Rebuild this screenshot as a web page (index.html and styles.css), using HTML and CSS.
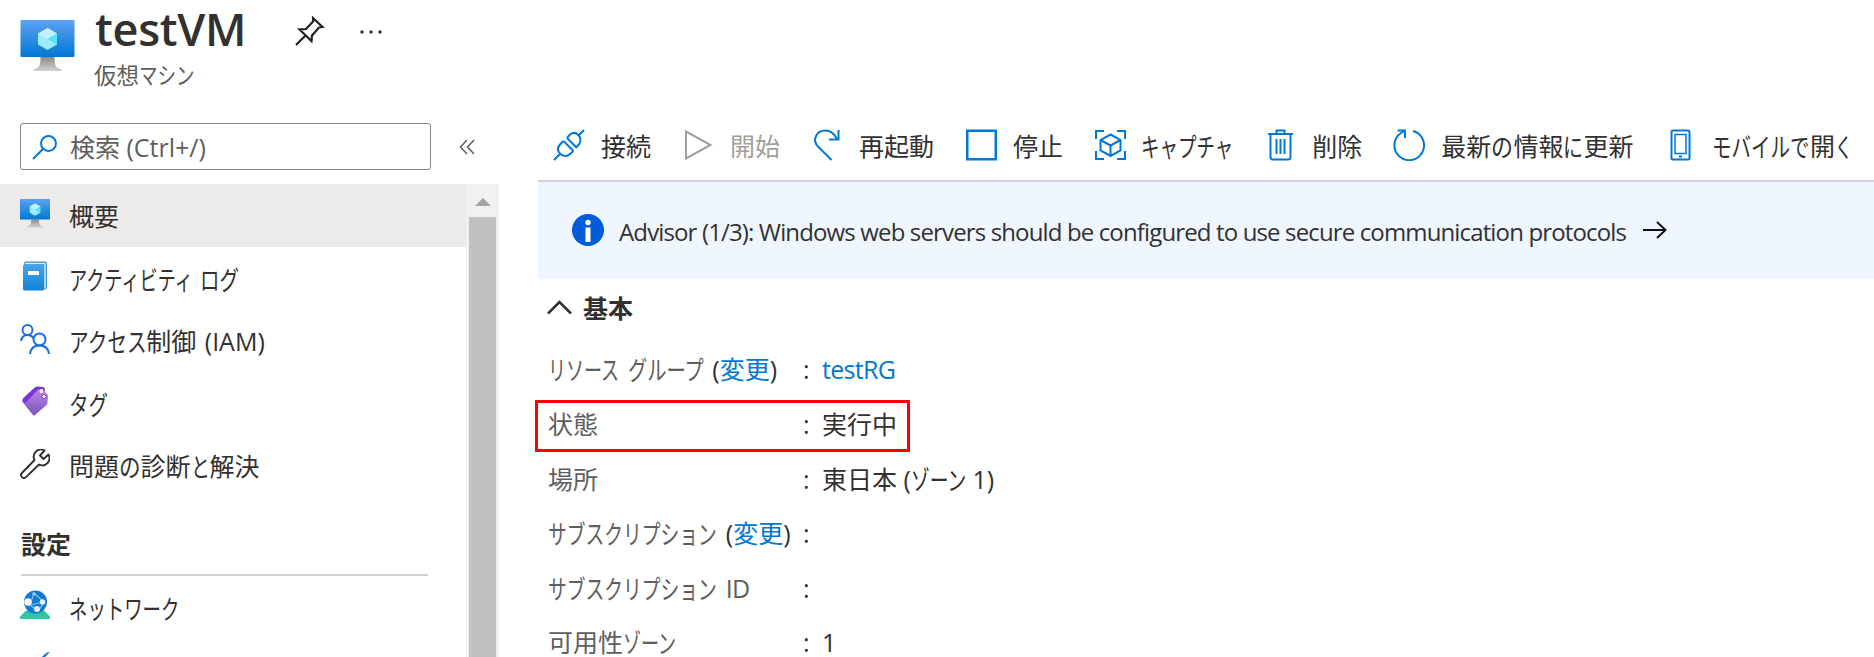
FILE: index.html
```html
<!DOCTYPE html>
<html lang="ja">
<head>
<meta charset="utf-8">
<title>testVM</title>
<link rel="stylesheet" href="styles.css">
</head>
<body>
<svg class="defs" width="0" height="0">
  <defs>
    <linearGradient id="screen" x1="0" y1="0" x2="0" y2="1"><stop offset="0" stop-color="#5ea0ef"/><stop offset="1" stop-color="#0078d4"/></linearGradient>
    <linearGradient id="stand" x1="0" y1="0" x2="0" y2="1"><stop offset="0" stop-color="#8a8a8a"/><stop offset="1" stop-color="#d2d2d2"/></linearGradient>
    <linearGradient id="book" x1="0" y1="0" x2="0" y2="1"><stop offset="0" stop-color="#42a5f0"/><stop offset="1" stop-color="#1583db"/></linearGradient>
    <linearGradient id="tag" x1="0" y1="0" x2="0" y2="1"><stop offset="0" stop-color="#b98ae6"/><stop offset="1" stop-color="#7c50bd"/></linearGradient>
    <symbol id="vm" viewBox="0 0 54 52">
      <path d="M20 37h14c0 8 1 11 6 12q1 .5 1 2H13q0-1.500 1-2c5-1 6-4 6-12z" fill="url(#stand)"/>
      <rect width="54" height="37" rx="1" fill="url(#screen)"/>
      <path d="M27 8l9.500 5.500v11L27 30l-9.500-5.500v-11z" fill="#9cebff"/>
      <path d="M27 8l9.500 5.500L27 19l-9.500-5.500z" fill="#c3f1ff"/>
      <path d="M36.500 13.500v11L27 19z" fill="#50e6ff"/>
    </symbol>
  </defs>
</svg>
<header class="header">
  <svg class="vm-icon" width="55" height="52"><use href="#vm"/></svg>
  <div class="heading">
    <div class="title-row">
      <h1 class="title">testVM</h1>
      <svg class="pin" width="30" height="30" viewBox="0 0 30 30" fill="none" stroke="#222" stroke-width="2.200"><path d="M1 29l9.500-9.500M18 2l9.500 9-3.500.5-7 8-.5 5.500L4.500 13.500l6.500-.5 7-7.500z"/></svg>
      <svg class="more" width="24" height="6" fill="#323130"><circle cx="3" cy="3" r="1.700"/><circle cx="12" cy="3" r="1.700"/><circle cx="21" cy="3" r="1.700"/></svg>
    </div>
    <p class="subtitle">仮想<span class="kana" style="--n:3;--s:.82">マシン</span></p>
  </div>
</header>
<div class="body">
  <aside class="side">
    <div class="search-row">
      <div class="search">
        <svg width="26" height="26" viewBox="0 0 26 26" fill="none" stroke="#0078d4" stroke-width="2"><circle cx="16.500" cy="9.500" r="7.500"/><path d="M11 15L1 25"/></svg>
        <span>検索 (Ctrl+/)</span>
      </div>
      <svg class="collapse" width="16" height="16" fill="none" stroke="#605e5c" stroke-width="1.500"><path d="M8 1L1.500 8 8 15M15 1L8.500 8l6.500 7"/></svg>
    </div>
    <div class="menu-wrap">
      <nav class="menu">
        <a class="item selected"><svg width="30" height="30" viewBox="0 0 30 30"><use href="#vm" width="30" height="29"/></svg><span>概要</span></a>
        <a class="item"><svg width="30" height="30" viewBox="0 0 30 30"><rect x="4" y=".5" width="23" height="28" rx="2" fill="#3d8fd0"/><path d="M5 2.500h20v25" fill="none" stroke="#d5ebfa" stroke-width="1.500"/><rect x="3" y="3.500" width="21" height="26" rx="1.500" fill="url(#book)"/><rect x="8" y="10" width="11" height="4" fill="#fff"/></svg><span><span class="kana" style="--n:7;--s:.725">アクティビティ</span> <span class="kana" style="--n:2;--s:.78">ログ</span></span></a>
        <a class="item"><svg width="30" height="30" viewBox="0 0 30 30" fill="none" stroke="#1a6ee0" stroke-width="2"><circle cx="7.500" cy="6" r="5"/><circle cx="19.500" cy="15.500" r="6"/><path d="M1 17q1-6 6.500-6 4 0 6 3M10 30q1-8.500 9.500-8.500T29 30"/></svg><span><span class="kana" style="--n:4;--s:.785">アクセス</span>制御 (IAM)</span></a>
        <a class="item"><svg width="30" height="30" viewBox="0 0 30 30"><path d="M3 12.500L15 1.500q1-1 3-1l5 .5q2 .5 2 2.500l-1 6-17 8z" fill="#7a35d8"/><path d="M3 14L18 3l8 4q2 1 2 3l-.5 7q0 1-1 2L15 29q-1 1-2 0L2.500 16q-1-1 .5-2z" fill="url(#tag)"/><path d="M3 12.500L15 1.500l4 1L5 17.500 2.500 15z" fill="#7a35d8"/><circle cx="21.500" cy="5" r="2" fill="#fff"/><circle cx="24" cy="10.500" r="2" fill="#fff" stroke="#7a3bc8"/></svg><span class="kana" style="--n:2;--s:.78">タグ</span></a>
        <a class="item"><svg width="30" height="30" viewBox="0 0 30 30" fill="none" stroke="#323130" stroke-width="1.900" stroke-linejoin="round"><path d="M24.500 1.500a7.200 7.200 0 0 0-10 9.500L1.900 24a2.900 2.900 0 0 0 4.100 4.100L19 15.500a7.200 7.200 0 0 0 9.500-10L23.500 10l-3.500-3.500z"/></svg><span>問題<span class="kana" style="--n:1;--s:.86">の</span>診断<span class="kana" style="--n:1;--s:.76">と</span>解決</span></a>
        <h2 class="section">設定</h2>
        <a class="item"><svg width="30" height="30" viewBox="0 0 30 30"><path d="M6 20.500h18l6 6v2.500H0v-2.500z" fill="#32c5a5"/><circle cx="15.500" cy="12" r="11.500" fill="#1379d3"/><path d="M14 3l10 9-14 3zM24 12l-5 8M10 15l8 6" fill="none" stroke="#7cc0f5" stroke-width="1.200"/><circle cx="8" cy="12" r="3.800" fill="#f1f7fc"/><circle cx="14" cy="4" r="1.800" fill="#8fc9f5"/><circle cx="22.500" cy="12" r="2.800" fill="#e2f1fc"/><circle cx="17" cy="19" r="3" fill="#e2f1fc"/></svg><span class="kana" style="--n:6;--s:.735">ネットワーク</span></a>
        <a class="item next"><svg width="30" height="30" viewBox="0 0 30 30"><path d="M30 0L5 25l-2-2L25 2q2-2 5-2z" fill="#1a6ee0"/></svg></a>
      </nav>
      <div class="scrollbar"><i class="arrow-up"></i><i class="thumb"></i></div>
    </div>
  </aside>
  <main class="main">
    <div class="toolbar">
      <a class="cmd"><svg width="32" height="32" viewBox="0 0 32 32" fill="none" stroke="#0078d4" stroke-width="2"><path d="M1 31l6.500-6.500M25 7l6-6M10.500 12l10 10M14 9l10 10"/><path d="M10.500 12l-3.500 3.500q-4.500 5 .5 9.500 5 4 9.500 0l3.500-3M14 9l3-3.500q5-3.500 8.500.5t.5 9.500l-3 3"/></svg><span>接続</span></a>
      <a class="cmd disabled"><svg width="32" height="32" viewBox="0 0 32 32" fill="none" stroke="#a19f9d" stroke-width="2"><path d="M4 2.500v27L28.500 16z"/></svg><span>開始</span></a>
      <a class="cmd"><svg width="32" height="32" viewBox="0 0 32 32" fill="none" stroke="#0078d4" stroke-width="2"><path d="M20.500 31L7 17.500C1 11 5 1.500 14.500 1.500q7 0 11.500 8.500M27.500 1v9.500H18"/></svg><span>再起動</span></a>
      <a class="cmd"><svg width="32" height="32" viewBox="0 0 32 32" fill="none" stroke="#0078d4" stroke-width="2.500"><rect x="2.250" y="1.750" width="28.500" height="28.500"/></svg><span>停止</span></a>
      <a class="cmd capture"><svg width="32" height="32" viewBox="0 0 32 32" fill="none" stroke="#0078d4" stroke-width="2"><path d="M2 10V2h8M23 2h8v8M31 22v8h-8M10 30H2v-8M16.500 5.500l10 5.500v10.500l-10 5.500-10-5.500V11zM6.500 11l10 5.500 10-5.500M16.500 16.500V27"/></svg><span class="kana" style="--n:5;--s:.74">キャプチャ</span></a>
      <a class="cmd"><svg width="32" height="32" viewBox="0 0 32 32" fill="none" stroke="#0078d4" stroke-width="2"><path d="M4 5h25M12.500 5V1.500h8V5M6.500 5v23q0 2.500 2.500 2.500h15q2.500 0 2.500-2.500V5M12.500 10v15M16.500 10v15M20.500 10v15"/></svg><span>削除</span></a>
      <a class="cmd"><svg width="32" height="32" viewBox="0 0 32 32" fill="none" stroke="#0078d4" stroke-width="2"><path d="M20 2A14.800 14.800 0 1 1 8 4L12 1.500M4.500 1.500h7.500v7.500"/></svg><span>最新<span class="kana" style="--n:1;--s:.88">の</span>情報<span class="kana" style="--n:1;--s:.8">に</span>更新</span></a>
      <a class="cmd"><svg width="32" height="32" viewBox="0 0 32 32" fill="none" stroke="#0078d4" stroke-width="2"><rect x="7.500" y="1.500" width="18" height="29" rx="1.500"/><path d="M11 5.500h11v19H11z" stroke-width="1.500"/><path d="M15 27.500h3"/></svg><span><span class="kana" style="--n:5;--s:.78">モバイルで</span>開<span class="kana" style="--n:1;--s:.7">く</span></span></a>
    </div>
    <div class="banner">
      <svg width="32" height="32"><circle cx="16" cy="16" r="16" fill="#015cda"/><circle cx="16" cy="8.500" r="2.700" fill="#fff"/><path d="M13.500 13.500h5V28h-5z" fill="#fff"/></svg>
      <span class="advice">Advisor (1/3): Windows web servers should be configured to use secure communication protocols</span>
      <svg width="24" height="18" fill="none" stroke="#111" stroke-width="2"><path d="M0 9h22M14 1l8.500 8-8.500 8"/></svg>
    </div>
    <div class="essentials"><svg width="25" height="15" fill="none" stroke="#323130" stroke-width="2.500"><path d="M1 13.500L12.500 2 24 13.500"/></svg><h2>基本</h2></div>
    <div class="props">
      <div class="prop"><div class="label"><span class="kana" style="--n:4;--s:.72">リソース</span> <span class="kana" style="--n:4;--s:.77">グループ</span> <b>(</b><a>変更</a><b>)</b></div><i>:</i><a class="latin">testRG</a></div>
      <div class="prop marked"><div class="label">状態</div><i>:</i><span>実行中</span></div>
      <div class="prop"><div class="label">場所</div><i>:</i><span>東日本 (<span class="kana" style="--n:3;--s:.75">ゾーン</span> 1)</span></div>
      <div class="prop"><div class="label"><span class="kana" style="--n:9;--s:.75">サブスクリプション</span> <b>(</b><a>変更</a><b>)</b></div><i>:</i></div>
      <div class="prop"><div class="label"><span class="kana" style="--n:9;--s:.75">サブスクリプション</span> <span class="latin">ID</span></div><i>:</i></div>
      <div class="prop"><div class="label">可用性<span class="kana" style="--n:3;--s:.72">ゾーン</span></div><i>:</i><span>1</span></div>
    </div>
  </main>
</div>
</body>
</html>
```
FILE: styles.css
```css
* { box-sizing: border-box; }
body {
  margin: 0;
  width: 1874px;
  height: 657px;
  overflow: hidden;
  background: #fff;
  color: #323130;
  font: 400 25px/36px "Open Sans", "Noto Sans CJK JP", sans-serif;
  white-space: nowrap;
}
svg { flex: none; display: block; }
.defs { position: absolute; }
h1, h2, p { margin: 0; }

/* Condensed kana run: --n characters, each --s em wide */
.kana {
  display: inline-block;
  transform: scale(var(--s), 1.06);
  transform-origin: left;
  margin-right: calc(var(--n) * (var(--s) - 1) * 1em);
}

.header { display: flex; height: 123px; padding-left: 20px; }
.vm-icon { margin-top: 20px; }
.heading { margin-left: 20px; }
.title-row { display: flex; height: 60px; align-items: center; }
.title { width: 200px; font-size: 45px; line-height: 60px; font-weight: 600; margin-top: -3px; letter-spacing: -.3px; }
.pin { margin-top: 2px; }
.more { margin: 4px 0 0 34px; }
.subtitle { margin-left: -1px; font-size: 22.500px; line-height: 32px; color: #605e5c; }

.body { display: flex; height: 534px; }
.side { width: 538px; flex: none; }
.search-row { display: flex; align-items: center; height: 47px; padding-left: 20px; }
.search {
  display: flex;
  align-items: center;
  width: 411px;
  height: 47px;
  padding-left: 11px;
  gap: 12px;
  border: 1.500px solid #8a8886;
  border-radius: 3px;
  color: #605e5c;
}
.collapse { margin-left: 28px; }
.menu-wrap { display: flex; height: 473px; margin-top: 14px; width: 499px; }
.menu { width: 466px; overflow: hidden; }
.item {
  display: flex;
  align-items: center;
  gap: 19px;
  height: 62.500px;
  padding: 2px 0 0 20px;
  word-spacing: 2px;
}
.item svg { margin-top: -5px; }
.selected { background: #edebe9; }
.section {
  width: 407px;
  height: 79px;
  margin-left: 21px;
  padding-top: 29px;
  border-bottom: 2px solid #d2d0ce;
  font-size: 25px;
  font-weight: 700;
}
.next { align-items: flex-start; padding-top: 19px; }
.scrollbar {
  display: flex;
  flex-direction: column;
  align-items: center;
  width: 33px;
  background: #f1f1f1;
}
.arrow-up {
  margin: 14px 0 11px;
  border: 8px solid transparent;
  border-top: 0;
  border-bottom-color: #a3a3a3;
}
.thumb { width: 27px; flex: 1; background: #c1c1c1; }

.main { flex: 1; min-width: 0; }
.toolbar {
  display: flex;
  align-items: center;
  gap: 30px;
  height: 58.500px;
  padding: 0 0 13px 15px;
  border-bottom: 2px solid #d2d0ce;
}
.cmd { display: flex; align-items: center; gap: 17px; }
.cmd > span { position: relative; left: -1px; top: 1px; }
.capture { gap: 16px; }
.disabled { color: #a19f9d; }
.banner {
  display: flex;
  align-items: center;
  height: 97.500px;
  padding-left: 34px;
  background: #eff6ff;
  border-radius: 0 0 0 4px;
}
.advice { width: 1007px; margin: 3px 17px 0 15px; font-size: 24px; letter-spacing: -.86px; }
.essentials { display: flex; align-items: center; gap: 11px; height: 63px; padding: 0 0 6px 9px; }
.essentials h2 { font-size: 25px; font-weight: 700; line-height: 36px; }
.prop { display: flex; align-items: center; height: 54.600px; padding-left: 10px; }
.prop .label { width: 255px; color: #605e5c; word-spacing: 2.500px; }
.prop i { width: 19px; font-style: normal; }
.prop b { font-weight: 400; color: #323130; }
.prop a { color: #0078d4; }
.latin { letter-spacing: -.7px; }
.marked {
  width: 375px;
  height: 52px;
  margin: 3.500px 0 -.9px -3px;
  padding: 0 0 5px;
  padding-left: 10px;
  border: 3px solid #f00;
}
```
